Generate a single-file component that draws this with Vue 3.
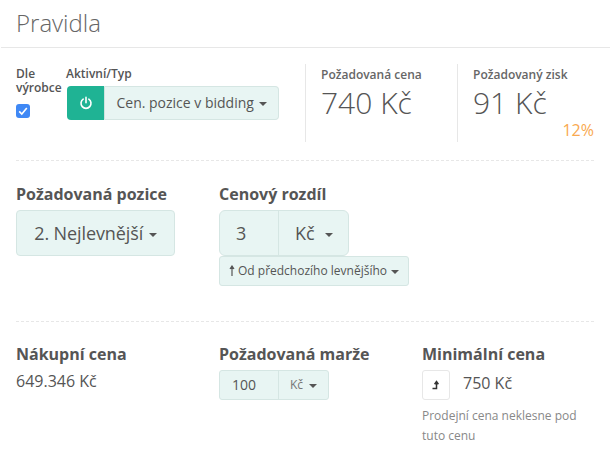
<script setup>
</script>

<template>
  <div class="panel">
    <h2 class="title">Pravidla</h2>
    <div class="body">
      <section class="top">
        <div class="maker">
          <label class="tiny">Dle<br>výrobce</label>
          <span class="check">
            <svg viewBox="0 0 14 14" width="14" height="14"><path d="M3.2 7.4l2.6 2.7 5-6" fill="none" stroke="#fff" stroke-width="1.6"/></svg>
          </span>
        </div>
        <div class="active">
          <label class="tiny">Aktivní/Typ</label>
          <div class="btn-group">
            <span class="power">
              <svg viewBox="0 0 14 14" width="14" height="14"><path d="M4.2 3.2a5 5 0 1 0 5.6 0M7 1.4v5.4" fill="none" stroke="#fff" stroke-width="1.6" stroke-linecap="round"/></svg>
            </span>
            <span class="type">Cen. pozice v bidding <i class="caret"></i></span>
          </div>
        </div>
        <div class="stat stat-a">
          <div class="stat-label">Požadovaná cena</div>
          <div class="stat-value">740 Kč</div>
        </div>
        <div class="stat stat-b">
          <div class="stat-label">Požadovaný zisk</div>
          <div class="stat-value">91 Kč</div>
          <div class="pct">12%</div>
        </div>
      </section>

      <section class="middle">
        <div class="col-a">
          <h4 class="head">Požadovaná pozice</h4>
          <div class="select-big">2. Nejlevnější <i class="caret"></i></div>
        </div>
        <div class="col-b">
          <h4 class="head">Cenový rozdíl</h4>
          <div class="pair">
            <span class="pair-num">3</span>
            <span class="pair-unit">Kč <i class="caret"></i></span>
          </div>
          <div class="from">
            <svg viewBox="0 0 6 12" width="6" height="12"><path d="M3 11V2M1 4l2-3 2 3" fill="#555" stroke="#555" stroke-width="1.2"/></svg>
            Od předchozího levnějšího <i class="caret"></i>
          </div>
        </div>
      </section>

      <section class="bottom">
        <div class="col-a">
          <h4 class="head">Nákupní cena</h4>
          <div class="price">649.346 Kč</div>
        </div>
        <div class="col-b">
          <h4 class="head">Požadovaná marže</h4>
          <div class="pair small">
            <span class="pair-num">100</span>
            <span class="pair-unit">Kč <i class="caret"></i></span>
          </div>
        </div>
        <div class="col-c">
          <h4 class="head">Minimální cena</h4>
          <div class="min-row">
            <span class="icon-btn">
              <svg viewBox="0 0 10 10" width="10" height="10"><path d="M1.5 8.5H5.5V3M3.6 4.2L5.5 1.6 7.4 4.2" fill="none" stroke="#333" stroke-width="1.5"/></svg>
            </span>
            <span class="price">750 Kč</span>
          </div>
          <p class="note">Prodejní cena neklesne pod tuto cenu</p>
        </div>
      </section>
    </div>
  </div>
</template>

<style>
html, body { margin: 0; background: #fff; }
</style>

<style scoped>
.panel {
  width: 610px;
  height: 476px;
  box-sizing: border-box;
  overflow: hidden;
  background: #fff;
  color: #555;
  font-family: "Open Sans", sans-serif;
  font-size: 14px;
}
.title {
  margin: 0 0 0 1px;
  height: 48px;
  box-sizing: border-box;
  padding: 8px 0 0 15px;
  border-bottom: 1px solid #e7e7e7;
  font-size: 24px;
  font-weight: 300;
  line-height: 30px;
  color: #666;
}
.body { padding: 0 16px; }
.top {
  display: flex;
  height: 113px;
  box-sizing: border-box;
  border-bottom: 1px dashed #e7e7e7;
  padding-top: 16px;
  width: 578px;
}
.tiny {
  display: block;
  font-size: 12px;
  font-weight: 600;
  line-height: 14px;
  color: #555;
}
.maker { width: 50px; padding-top: 3px; }
.check {
  display: flex;
  width: 14px;
  height: 14px;
  margin-top: 9px;
  background: #3f88f5;
  border-radius: 3px;
}
.active { width: 239px; padding-top: 3px; }
.btn-group { display: flex; height: 34px; margin: 5px 0 0 1px; width: 212px; }
.power {
  width: 37px;
  background: #1fb394;
  border-radius: 4px 0 0 4px;
  display: flex;
  align-items: center;
  justify-content: center;
}
.type {
  flex: 1;
  background: #e8f5f3;
  border: 1px solid #d5e6e3;
  border-left-color: #cfe3df;
  border-radius: 0 4px 4px 0;
  font-size: 14px;
  line-height: 32px;
  text-align: center;
  white-space: nowrap;
}
.caret {
  display: inline-block;
  width: 0;
  height: 0;
  margin-left: 1px;
  vertical-align: middle;
  border-top: 4px solid #555;
  border-left: 4px solid transparent;
  border-right: 4px solid transparent;
}
.stat {
  border-left: 1px solid #e7e7e7;
  height: 78px;
  box-sizing: border-box;
  padding-left: 15px;
  position: relative;
}
.stat-a { width: 152px; }
.stat-b { flex: 1; }
.stat-label { font-size: 12px; font-weight: 600; line-height: 16px; padding-top: 3px; color: #666; }
.stat-value { font-size: 30px; font-weight: 300; line-height: 38px; margin-top: 1px; color: #555; }
.pct {
  position: absolute;
  right: 0;
  bottom: 1px;
  color: #f9a94f;
  font-size: 16px;
  font-weight: 400;
}
.middle {
  display: flex;
  height: 161px;
  box-sizing: border-box;
  padding-top: 23px;
  border-bottom: 1px dashed #e7e7e7;
  width: 578px;
}
.col-a { width: 203px; flex: none; }
.col-b { width: 203px; flex: none; }
.head {
  margin: 0;
  font-size: 16px;
  font-weight: 700;
  line-height: 20px;
  color: #555;
}
.select-big {
  margin-top: 6px;
  width: 159px;
  height: 46px;
  box-sizing: border-box;
  background: #e8f5f3;
  border: 1px solid #d5e6e3;
  border-radius: 4px;
  font-size: 18px;
  line-height: 44px;
  letter-spacing: -.1px;
  text-align: center;
  white-space: nowrap;
}
.pair {
  display: flex;
  margin-top: 6px;
  width: 130px;
  height: 46px;
  box-sizing: border-box;
  background: #e8f5f3;
  border: 1px solid #d5e6e3;
  border-radius: 6px;
  font-size: 18px;
  line-height: 44px;
}
.pair-num { width: 59px; box-sizing: border-box; padding-left: 16px; border-right: 1px solid #d5e6e3; }
.pair-unit { flex: 1; padding-left: 16px; }
.pair-unit .caret { margin-left: 6px; }
.from {
  width: 190px;
  height: 30px;
  box-sizing: border-box;
  background: #e8f5f3;
  border: 1px solid #d5e6e3;
  border-radius: 3px;
  font-size: 12px;
  line-height: 28px;
  text-align: center;
  white-space: nowrap;
}
.from svg { vertical-align: -2px; }
.bottom {
  display: flex;
  padding-top: 22px;
  width: 578px;
}
.col-c { flex: 1; }
.price { font-size: 16px; line-height: 22px; margin-top: 6px; display: block; }
.pair.small { width: 110px; height: 30px; line-height: 28px; font-size: 14px; border-radius: 3px; }
.small .pair-num { padding-left: 12px; }
.small .pair-unit { font-size: 12px; padding-left: 11px; color: #777; }
.small .pair-unit .caret { margin-left: 3px; }
.min-row { display: flex; gap: 13px; margin-top: 6px; }
.min-row .price { margin-top: 0; line-height: 26px; }
.icon-btn {
  width: 28px;
  height: 30px;
  box-sizing: border-box;
  border: 1px solid #e7e7e7;
  border-radius: 3px;
  display: flex;
  align-items: center;
  justify-content: center;
}
.note {
  margin: 6px 0 0;
  font-size: 12px;
  line-height: 20px;
  color: #888;
  width: 165px;
}
</style>
